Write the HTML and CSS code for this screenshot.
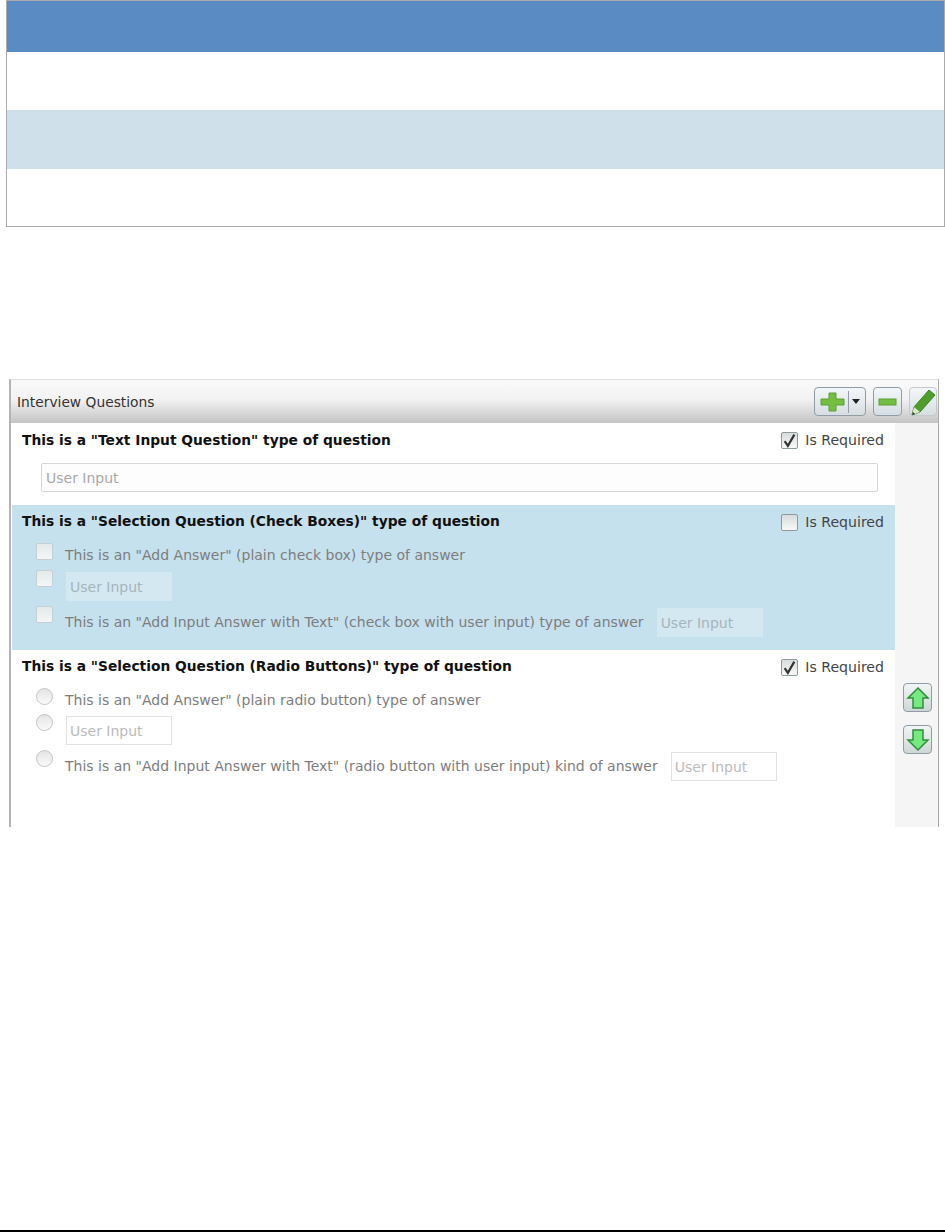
FILE: index.html
```html
<!DOCTYPE html>
<html lang="en">
<head>
    <meta charset="UTF-8">
    <title>Interview Questions</title>
    <link rel="stylesheet" href="styles.css">
</head>
<body>
    <div class="top-table">
        <div class="table-head"></div>
        <div class="table-row"></div>
        <div class="table-row shaded"></div>
        <div class="table-row"></div>
    </div>

    <div class="panel">
        <div class="panel-header">
            <span class="panel-title">Interview Questions</span>
            <div class="toolbar">
                <button class="tool-btn add-btn">
                    <svg width="25" height="20" viewBox="0 0 25 20"><path d="M9 1h7v6h8v6h-8v6H9v-6H1V7h8z" fill="#74bf42" stroke="#5a9e34"/></svg>
                    <span class="add-divider"></span>
                    <svg width="8" height="5" viewBox="0 0 8 5"><path d="M0 0h8L4 5z" fill="#222"/></svg>
                </button>
                <button class="tool-btn minus-btn">
                    <svg width="19" height="8" viewBox="0 0 19 8"><rect x="1" y="1" width="17" height="6" fill="#74bf42" stroke="#5a9e34"/></svg>
                </button>
                <button class="tool-btn pencil-btn">
                    <svg width="26" height="28" viewBox="0 0 26 28"><path d="M19 2l6 5L10 24l-8 3 2-8z" fill="#4f9e2c" stroke="#3b8526"/><path d="M2 27l2-8 6 5z" fill="#dfe8c8"/><path d="M2 27l.8-3 2.4 2z" fill="#333"/></svg>
                </button>
            </div>
        </div>

        <div class="panel-body">
            <div class="questions">
                <div class="question q-text">
                    <div class="question-head">
                        <span class="question-title">This is a "Text Input Question" type of question</span>
                        <label class="required"><span class="checkbox checked"><svg width="15" height="15" viewBox="0 0 14 14"><path d="M2.5 7.5l3 4.5L11.5 1.5" fill="none" stroke="#333" stroke-width="2"/></svg></span>Is Required</label>
                    </div>
                    <div class="input wide">User Input</div>
                </div>

                <div class="question q-check selected">
                    <div class="question-head">
                        <span class="question-title">This is a "Selection Question (Check Boxes)" type of question</span>
                        <label class="required"><span class="checkbox"></span>Is Required</label>
                    </div>
                    <div class="answer first">
                        <span class="checkbox faded"></span>
                        <span class="answer-text">This is an "Add Answer" (plain check box) type of answer</span>
                    </div>
                    <div class="answer second">
                        <span class="checkbox faded"></span>
                        <div class="input small filled">User Input</div>
                    </div>
                    <div class="answer third">
                        <span class="checkbox faded"></span>
                        <span class="answer-text">This is an "Add Input Answer with Text" (check box with user input) type of answer</span>
                        <div class="input small filled">User Input</div>
                    </div>
                </div>

                <div class="question q-radio">
                    <div class="question-head">
                        <span class="question-title">This is a "Selection Question (Radio Buttons)" type of question</span>
                        <label class="required"><span class="checkbox checked"><svg width="15" height="15" viewBox="0 0 14 14"><path d="M2.5 7.5l3 4.5L11.5 1.5" fill="none" stroke="#333" stroke-width="2"/></svg></span>Is Required</label>
                    </div>
                    <div class="answer first">
                        <span class="radio"></span>
                        <span class="answer-text">This is an "Add Answer" (plain radio button) type of answer</span>
                    </div>
                    <div class="answer second">
                        <span class="radio"></span>
                        <div class="input small">User Input</div>
                    </div>
                    <div class="answer third">
                        <span class="radio"></span>
                        <span class="answer-text">This is an "Add Input Answer with Text" (radio button with user input) kind of answer</span>
                        <div class="input small">User Input</div>
                    </div>
                </div>
            </div>

            <div class="side">
                <button class="arrow-btn">
                    <svg width="24" height="24" viewBox="0 0 24 24"><path d="M12 2l10 10h-5v10H7V12H2z" fill="#74ea80" stroke="#2f8f3a" stroke-width="1.5"/></svg>
                </button>
                <button class="arrow-btn">
                    <svg width="24" height="24" viewBox="0 0 24 24"><path d="M7 2h10v10h5L12 22 2 12h5z" fill="#74ea80" stroke="#2f8f3a" stroke-width="1.5"/></svg>
                </button>
            </div>
        </div>
    </div>

    <div class="bottom-rule"></div>
</body>
</html>
```

FILE: styles.css
```css
html, body {
    margin: 0;
    padding: 0;
    height: 1232px;
    overflow: hidden;
    background: #fff;
}
body {
    display: flex;
    flex-direction: column;
    font-family: "DejaVu Sans", Verdana, sans-serif;
    font-size: 14px;
    color: #7d7d7d;
}
.top-table {
    margin-left: 6px;
    height: 227px;
    box-sizing: border-box;
    border: 1px solid #aaa;
    display: flex;
    flex-direction: column;
}
.table-head {
    height: 51px;
    background: #5b8bc3;
}
.table-row {
    flex: 1;
}
.table-row.shaded {
    flex: none;
    height: 59px;
    background: #cfe0ea;
}
.panel {
    margin: 152px 6px 0 9px;
    height: 448px;
    border-left: 2px solid #b4b4b4;
    border-top: 1px solid #ddd;
    border-right: 1px solid #aaa;
    box-sizing: border-box;
    display: flex;
    flex-direction: column;
}
.panel-header {
    height: 43px;
    flex: none;
    display: flex;
    align-items: center;
    justify-content: space-between;
    padding: 0 1px 0 6px;
    background: linear-gradient(#fafafa, #f2f2f2 45%, #c4c4c4);
    color: #333;
    font-size: 13.8px;
}
.toolbar {
    display: flex;
    align-items: center;
    gap: 7px;
}
.tool-btn, .arrow-btn {
    padding: 0;
    border: 1px solid #8f9ca5;
    border-radius: 4px;
    background: linear-gradient(#f4f7f9, #d6dee2);
    display: flex;
    align-items: center;
    justify-content: center;
    height: 29px;
}
.add-btn {
    width: 52px;
    gap: 3px;
}
.add-divider {
    width: 1px;
    height: 22px;
    background: #99a;
}
.minus-btn {
    width: 29px;
}
.pencil-btn {
    width: 28px;
    border-color: #c4caca;
}
.panel-body {
    flex: 1;
    display: flex;
    min-height: 0;
}
.questions {
    width: 883px;
    margin-left: 1px;
}
.side {
    flex: 1;
    background: #f5f5f5;
    display: flex;
    flex-direction: column;
    align-items: center;
    gap: 13px;
    padding: 260px 0 0 2px;
}
.arrow-btn {
    width: 29px;
    height: 29px;
    background: linear-gradient(#f2f5f5, #cfd6d6);
}
.question {
    box-sizing: border-box;
    padding: 0 10px;
}
.q-text {
    height: 82px;
}
.q-check {
    height: 145px;
}
.q-radio {
    height: 177px;
}
.selected {
    background: #c5e1ee;
}
.question-head {
    display: flex;
    justify-content: space-between;
    align-items: center;
    height: 32px;
}
.q-text .question-head {
    height: 34px;
    margin-bottom: 6px;
}
.question-title {
    font-weight: bold;
    font-size: 13.8px;
    color: #111;
}
.required {
    display: flex;
    align-items: center;
    gap: 7px;
    color: #444;
    font-size: 14.1px;
    padding-right: 1px;
}
.q-check .required, .q-radio .required {
    padding-top: 2px;
}
.checkbox {
    width: 17px;
    height: 17px;
    box-sizing: border-box;
    border: 1px solid #8f9a9a;
    border-radius: 2px;
    background: linear-gradient(#d8dcdc, #f8f8f8);
    display: flex;
    align-items: center;
    justify-content: center;
    flex: none;
}
.checkbox.faded {
    border-color: #c6cfd3;
    background: linear-gradient(#e4e9ea, #f4f6f6);
}
.radio {
    width: 17px;
    height: 17px;
    box-sizing: border-box;
    border: 1px solid #c4c4c4;
    border-radius: 50%;
    background: linear-gradient(#e4e4e4, #fafafa);
    flex: none;
}
.input {
    box-sizing: border-box;
    border: 1px solid #d6d6d6;
    background: #fff;
    color: #a8a8a8;
    padding: 0 4px;
    display: flex;
    align-items: center;
    height: 29px;
}
.input.wide {
    margin-left: 19px;
    width: 837px;
    background: #fdfdfd;
    border-radius: 2px;
}
.input.small {
    width: 106px;
    margin-top: 2px;
    padding: 0 3px;
    border-color: #e2e2e2;
    color: #bbb;
}
.input.filled {
    background: #d4e8f1;
    border-color: #d4e8f1;
    color: #a5b5bc;
}
.answer {
    display: flex;
    align-items: flex-start;
    gap: 12px;
    padding-left: 14px;
}
.answer-text {
    line-height: 16px;
    padding-top: 4px;
}
.answer.first {
    height: 27px;
    margin-top: 6px;
}
.q-radio .answer.first {
    height: 26px;
}
.answer.second {
    height: 36px;
}
.answer.second .input {
    margin-left: 1px;
}
.answer.third .answer-text {
    padding-top: 8px;
}
.answer.third .input {
    margin-left: 1px;
}
.bottom-rule {
    margin-top: auto;
    height: 2px;
    background: #000;
}
```
